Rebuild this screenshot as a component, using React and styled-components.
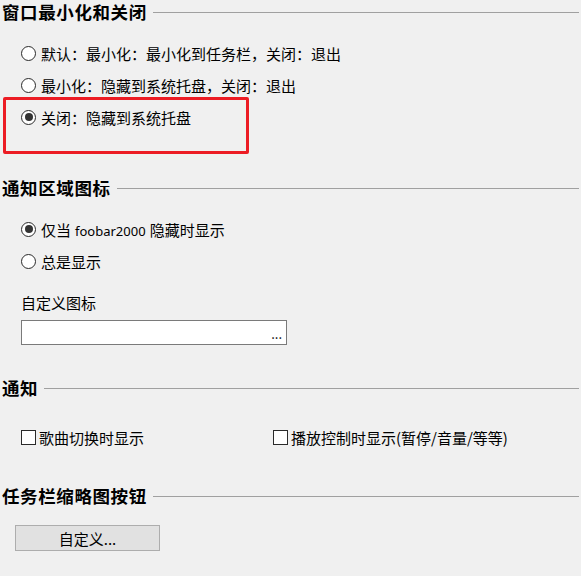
import styled, { createGlobalStyle } from "styled-components";

const GlobalStyle = createGlobalStyle`
  html, body {
    margin: 0;
    padding: 0;
    background: #f0f0f0;
  }
  body {
    font-family: "Noto Sans CJK SC", "Noto Sans", sans-serif;
    color: #000;
  }
`;

const Page = styled.div`
  width: 581px;
  height: 576px;
  background: #f0f0f0;
  overflow: hidden;
`;

const Header = styled.div`
  display: flex;
  align-items: center;
  height: 24px;
  margin-top: ${(p) => p.$top}px;
  padding-left: 2px;
`;

const HeaderTitle = styled.span`
  font-size: 17.5px;
  font-weight: 700;
  letter-spacing: 0.6px;
  line-height: 24px;
`;

const HeaderLine = styled.div`
  flex: 1;
  height: 1px;
  background: #a0a0a0;
  margin: 0 2px 0 6px;
`;

const Options = styled.div`
  display: flex;
  flex-direction: column;
  padding-left: 21px;
  margin-top: 13px;
`;

const OptionRow = styled.label`
  position: relative;
  display: flex;
  align-items: center;
  height: 32px;
  font-size: 15px;
  gap: 5px;
`;

const Radio = styled.span`
  box-sizing: border-box;
  flex-shrink: 0;
  width: 15px;
  height: 15px;
  border-radius: 50%;
  border: 1.5px solid #2a2a2a;
  background: #fff;
  display: flex;
  align-items: center;
  justify-content: center;
  &::after {
    content: "";
    width: 8px;
    height: 8px;
    border-radius: 50%;
    background: ${(p) => (p.$checked ? "#333" : "transparent")};
  }
`;

const Highlight = styled.div`
  position: absolute;
  left: -18px;
  top: -4px;
  width: 246px;
  height: 57px;
  box-sizing: border-box;
  border: 3px solid #ec1c24;
  border-radius: 2px;
  pointer-events: none;
`;

const Latin = styled.span`
  font-family: "Noto Sans", sans-serif;
  font-size: 13px;
  margin: 0 4px;
`;

const FieldLabel = styled.div`
  font-size: 15px;
  line-height: 20px;
  height: 20px;
  margin: 16px 0 0 21px;
`;

const PathBox = styled.div`
  box-sizing: border-box;
  width: 266px;
  height: 25px;
  margin: 7px 0 0 21px;
  background: #fff;
  border: 1px solid #7a7a7a;
  display: flex;
  justify-content: flex-end;
  align-items: flex-end;
  padding: 0 4px 2px 0;
  font-size: 13px;
  line-height: 16px;
`;

const CheckRow = styled.div`
  display: flex;
  align-items: center;
  height: 32px;
  margin-top: 21px;
  padding-left: 21px;
`;

const CheckItem = styled.label`
  display: flex;
  align-items: center;
  gap: 3px;
  width: ${(p) => p.$width || "auto"};
  font-size: 15px;
`;

const Checkbox = styled.span`
  box-sizing: border-box;
  flex-shrink: 0;
  width: 15px;
  height: 15px;
  border: 1.5px solid #2a2a2a;
  background: #fff;
`;

const Button = styled.button`
  box-sizing: border-box;
  width: 145px;
  height: 26px;
  margin: 17px 0 0 15px;
  background: #e1e1e1;
  border: 1px solid #adadad;
  font-family: "Noto Sans CJK SC", sans-serif;
  font-size: 15px;
  color: #000;
  padding: 0;
`;

const App = () => {
  return (
    <Page>
      <GlobalStyle />
      <Header $top={0}>
        <HeaderTitle>窗口最小化和关闭</HeaderTitle>
        <HeaderLine />
      </Header>
      <Options>
        <OptionRow>
          <Radio />
          默认：最小化：最小化到任务栏，关闭：退出
        </OptionRow>
        <OptionRow>
          <Radio />
          最小化：隐藏到系统托盘，关闭：退出
        </OptionRow>
        <OptionRow>
          <Radio $checked />
          关闭：隐藏到系统托盘
          <Highlight />
        </OptionRow>
      </Options>

      <Header $top={43}>
        <HeaderTitle>通知区域图标</HeaderTitle>
        <HeaderLine />
      </Header>
      <Options>
        <OptionRow>
          <Radio $checked />
          <span>
            仅当<Latin>foobar2000</Latin>隐藏时显示
          </span>
        </OptionRow>
        <OptionRow>
          <Radio />
          总是显示
        </OptionRow>
      </Options>
      <FieldLabel>自定义图标</FieldLabel>
      <PathBox>...</PathBox>

      <Header $top={31}>
        <HeaderTitle>通知</HeaderTitle>
        <HeaderLine />
      </Header>
      <CheckRow>
        <CheckItem $width="252px">
          <Checkbox />
          歌曲切换时显示
        </CheckItem>
        <CheckItem>
          <Checkbox />
          播放控制时显示(暂停/音量/等等)
        </CheckItem>
      </CheckRow>

      <Header $top={31}>
        <HeaderTitle>任务栏缩略图按钮</HeaderTitle>
        <HeaderLine />
      </Header>
      <Button>自定义...</Button>
    </Page>
  );
};

export default App;
